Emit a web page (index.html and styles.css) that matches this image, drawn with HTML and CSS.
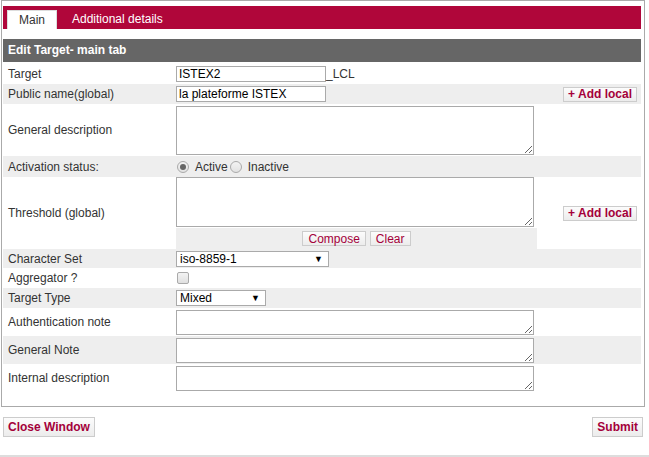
FILE: index.html
```html
<!DOCTYPE html>
<html>
<head>
<meta charset="utf-8">
<link rel="stylesheet" href="styles.css">
</head>
<body>
<div class="box">
  <div class="tabs">
    <span class="tab active">Main</span>
    <span class="tab">Additional details</span>
  </div>
  <div class="heading">Edit Target- main tab</div>
  <table class="form">
    <tr class="r20">
      <td class="lbl">Target</td>
      <td class="val"><input class="txt" type="text" value="ISTEX2"><span class="suffix">_LCL</span></td>
      <td class="act"></td>
    </tr>
    <tr class="r20">
      <td class="lbl">Public name(global)</td>
      <td class="val"><input class="txt" type="text" value="la plateforme ISTEX"></td>
      <td class="act"><button class="btn small bold">+ Add local</button></td>
    </tr>
    <tr class="r52">
      <td class="lbl">General description</td>
      <td class="val"><textarea class="ta big"></textarea></td>
      <td class="act"></td>
    </tr>
    <tr class="r21">
      <td class="lbl">Activation status:</td>
      <td class="val">
        <label class="radio"><input type="radio" name="st" checked>Active</label><label class="radio"><input type="radio" name="st">Inactive</label>
      </td>
      <td class="act"></td>
    </tr>
    <tr>
      <td class="lbl">Threshold (global)</td>
      <td class="val thr">
        <textarea class="ta thrta"></textarea>
        <div class="compose"><button class="btn small">Compose</button><button class="btn small">Clear</button></div>
      </td>
      <td class="act"><button class="btn small bold">+ Add local</button></td>
    </tr>
    <tr class="r19">
      <td class="lbl">Character Set</td>
      <td class="val"><span class="sel w152"><select><option>iso-8859-1</option></select></span></td>
      <td class="act"></td>
    </tr>
    <tr class="r20">
      <td class="lbl">Aggregator ?</td>
      <td class="val"><input class="chk" type="checkbox"></td>
      <td class="act"></td>
    </tr>
    <tr class="r20">
      <td class="lbl">Target Type</td>
      <td class="val"><span class="sel w89"><select><option>Mixed</option></select></span></td>
      <td class="act"></td>
    </tr>
    <tr class="r28">
      <td class="lbl">Authentication note</td>
      <td class="val"><textarea class="ta small"></textarea></td>
      <td class="act"></td>
    </tr>
    <tr class="r28">
      <td class="lbl">General Note</td>
      <td class="val"><textarea class="ta small"></textarea></td>
      <td class="act"></td>
    </tr>
    <tr class="r28">
      <td class="lbl">Internal description</td>
      <td class="val"><textarea class="ta small"></textarea></td>
      <td class="act"></td>
    </tr>
  </table>
</div>
<div class="footer">
  <button class="btn big bold">Close Window</button>
  <button class="btn big bold">Submit</button>
</div>
<div class="bottombar"></div>
</body>
</html>
```
FILE: styles.css
```css
* { box-sizing: border-box; }
body {
  margin: 0;
  font-family: "Liberation Sans", Arial, sans-serif;
  font-size: 12px;
  color: #333;
  background: #fff;
}
.box {
  margin-left: 1px;
  width: 644px;
  border: 1px solid #aaa;
  padding: 5px 3px 14px 1px;
}
.tabs {
  background: #b0063a;
  height: 23px;
  padding: 4px 0 0 4px;
  display: flex;
  align-items: flex-end;
}
.tab {
  color: #fff;
  height: 19px;
  line-height: 18px;
  padding: 0 11px 0 11px;
}
.tab.active {
  background: #fff;
  color: #333;
  width: 50px;
  padding: 0;
  text-align: center;
  border: 1px solid #ddd;
  border-bottom: 0;
  margin-right: 4px;
}
.heading {
  margin-top: 10px;
  background: #666;
  color: #fff;
  font-weight: bold;
  height: 23px;
  line-height: 23px;
  padding-left: 5px;
}
.form {
  margin-top: 2px;
  width: 638px;
  border-collapse: collapse;
  border-spacing: 0;
}
.form td { padding: 0; vertical-align: middle; }
.form tr:nth-child(even) { background: #eee; }
.lbl { width: 173px; padding-left: 5px !important; }
.val { width: 361px; }
.act { text-align: right; padding-right: 4px !important; }
.r19 { height: 19px; }
.r20 { height: 20px; }
.r21 { height: 21px; }
.r28 { height: 28px; }
.r52 { height: 52px; }
.txt {
  width: 150px;
  height: 16px;
  border: 1px solid #aaa;
  padding: 0 2px;
  font: 12px "Liberation Sans", Arial, sans-serif;
  color: #000;
  vertical-align: middle;
  margin: 0;
}
.suffix { vertical-align: middle; }
.ta {
  display: block;
  width: 358px;
  border: 1px solid #aaa;
  margin: 0;
  padding: 2px;
  font: 12px "Liberation Sans", Arial, sans-serif;
  resize: both;
}
.ta.big { height: 49px; }
.ta.small { height: 25px; }
.thr { padding-top: 0 !important; }
.ta.thrta { height: 50px; }
.compose {
  background: #eee;
  height: 21px;
  margin-top: 1px;
  display: flex;
  justify-content: center;
  align-items: center;
  gap: 4px;
}
.btn {
  font-family: "Liberation Sans", Arial, sans-serif;
  color: #a4003a;
  background: linear-gradient(#fcfcfc, #ececec);
  border: 1px solid #ccc;
  border-radius: 0;
  margin: 0;
  cursor: pointer;
}
.btn.small {
  font-size: 12px;
  height: 15px;
  line-height: 12px;
  padding: 0 5px;
}
.btn.bold { font-weight: bold; }
.act .btn.small { padding: 0 4px; }
.btn.big {
  font-size: 12px;
  height: 20px;
  padding: 0 4px;
}
.radio { display: inline-flex; align-items: center; vertical-align: middle; }
.radio input {
  appearance: none;
  -webkit-appearance: none;
  width: 12px;
  height: 12px;
  margin: 0 6px 0 1px;
  border: 1px solid #aaa;
  border-radius: 50%;
  background: linear-gradient(#f3f3f3, #e2e2e2);
  position: relative;
}
.radio input:checked::after {
  content: "";
  position: absolute;
  left: 2px;
  top: 2px;
  width: 6px;
  height: 6px;
  border-radius: 50%;
  background: #666;
}
.radio + .radio { margin-left: 1px; }
.chk {
  appearance: none;
  -webkit-appearance: none;
  width: 12px;
  height: 12px;
  margin: 0 0 0 1px;
  border: 1px solid #aaa;
  border-radius: 2px;
  background: linear-gradient(#f3f3f3, #e0e0e0);
  display: block;
}
.sel { position: relative; display: inline-block; vertical-align: middle; }
.sel select {
  appearance: none;
  -webkit-appearance: none;
  height: 16px;
  border: 1px solid #aaa;
  border-radius: 0;
  background: #fff;
  font: 12px "Liberation Sans", Arial, sans-serif;
  color: #000;
  padding: 0 3px;
  margin: 0;
  display: block;
}
.sel::after {
  content: "▼";
  position: absolute;
  right: 6px;
  top: 3px;
  font-size: 9px;
  line-height: 10px;
  color: #000;
  pointer-events: none;
}
.w152 select { width: 153px; }
.w89 select { width: 90px; }
.footer {
  margin-top: 10px;
  display: flex;
  justify-content: space-between;
  padding: 0 6px 0 3px;
}
.bottombar {
  margin-top: 18px;
  height: 3px;
  background: #ddd;
}
```
